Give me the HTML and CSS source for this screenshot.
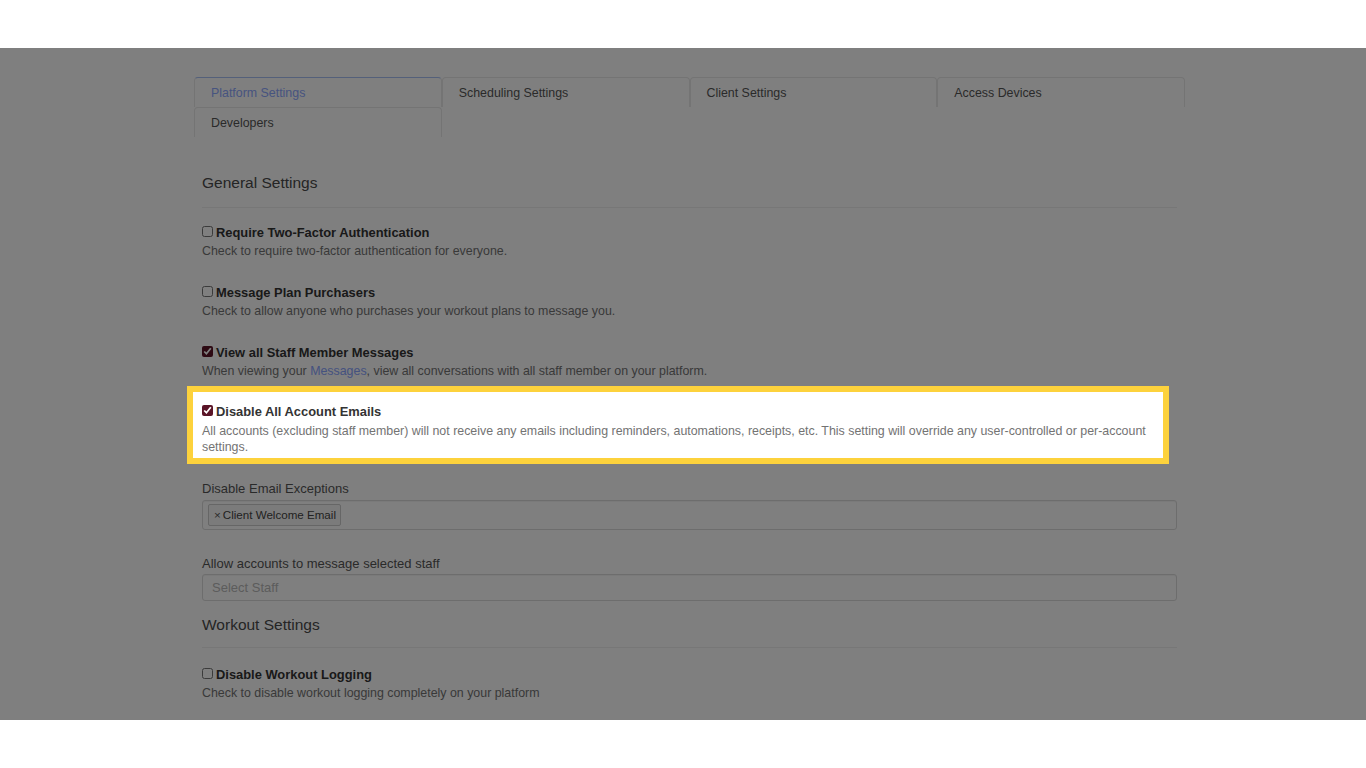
FILE: index.html
```html
<!DOCTYPE html>
<html lang="en">
<head>
  <meta charset="UTF-8">
  <meta name="viewport" content="width=device-width, initial-scale=1.0">
  <title>Platform Settings</title>
  <link rel="stylesheet" href="styles.css">
</head>
<body>
  <div class="screen">
    <div class="page">
      <div class="tabs">
        <div class="tab active">Platform Settings</div>
        <div class="tab">Scheduling Settings</div>
        <div class="tab">Client Settings</div>
        <div class="tab">Access Devices</div>
        <div class="tab">Developers</div>
      </div>

      <div class="content">
        <h2 class="section-title">General Settings</h2>
        <hr class="divider">

        <div class="setting">
          <label class="setting-title"><input type="checkbox">Require Two-Factor Authentication</label>
          <p class="setting-desc">Check to require two-factor authentication for everyone.</p>
        </div>

        <div class="setting">
          <label class="setting-title"><input type="checkbox">Message Plan Purchasers</label>
          <p class="setting-desc">Check to allow anyone who purchases your workout plans to message you.</p>
        </div>

        <div class="setting">
          <label class="setting-title"><input type="checkbox" checked>View all Staff Member Messages</label>
          <p class="setting-desc">When viewing your <a href="#">Messages</a>, view all conversations with all staff member on your platform.</p>
        </div>

        <div class="setting spotlight">
          <label class="setting-title"><input type="checkbox" checked>Disable All Account Emails</label>
          <p class="setting-desc">All accounts (excluding staff member) will not receive any emails including reminders, automations, receipts, etc. This setting will override any user-controlled or per-account settings.</p>
        </div>

        <div class="field">
          <div class="field-label">Disable Email Exceptions</div>
          <div class="multi-select">
            <span class="tag"><span class="tag-x">&times;</span>Client Welcome Email</span>
          </div>
        </div>

        <div class="field">
          <div class="field-label">Allow accounts to message selected staff</div>
          <div class="multi-select small">
            <span class="placeholder">Select Staff</span>
          </div>
        </div>

        <h2 class="section-title workout">Workout Settings</h2>
        <hr class="divider workout">

        <div class="setting">
          <label class="setting-title"><input type="checkbox">Disable Workout Logging</label>
          <p class="setting-desc">Check to disable workout logging completely on your platform</p>
        </div>
      </div>
    </div>
  </div>
</body>
</html>
```

FILE: styles.css
```css
body {
  margin: 0;
  background-color: #ffffff;
  font-family: "Liberation Sans", Arial, sans-serif;
  color: #333333;
}

.screen {
  margin-top: 48px;
  height: 672px;
  overflow: hidden;
  background-color: #ffffff;
  padding: 29px 181px 0 194px;
  box-sizing: border-box;
}

.tabs {
  display: grid;
  grid-template-columns: repeat(4, 1fr);
}

.tab {
  height: 29px;
  line-height: 30px;
  padding: 0 16px;
  font-size: 12.4px;
  color: #555555;
  border: 1px solid #e8e8e8;
  border-bottom: none;
  border-radius: 4px 4px 0 0;
}

.tab.active {
  color: #8ea8ff;
  border-top-color: #a9c0f4;
}

.content {
  padding: 0 8px;
}

.section-title {
  margin: 36px 0 0;
  font-size: 15.5px;
  font-weight: normal;
  line-height: 20px;
  color: #4a4a4a;
}

.section-title.workout {
  margin-top: 14px;
}

.divider {
  border: none;
  border-top: 1px solid #eeeeee;
  margin: 14px 0 15px;
}

.divider.workout {
  margin: 12px 0 17px;
}

.setting {
  margin-bottom: 24px;
}

.setting-title {
  display: flex;
  align-items: center;
  font-size: 12.9px;
  font-weight: bold;
  line-height: 20px;
  color: #333333;
}

.setting-title input {
  width: 11px;
  height: 11px;
  margin: -4px 3px 0 0;
  accent-color: #5a1426;
}

.setting-desc {
  margin: 0;
  font-size: 12.4px;
  line-height: 16px;
  color: #737373;
}

.setting-desc a {
  color: #8aa4ff;
  text-decoration: none;
}

.spotlight {
  position: relative;
  z-index: 1;
  margin: -17px 8px 0 -15px;
  padding: 10px 10px 3px 9px;
  border: 6px solid #fdd23c;
  background-color: #ffffff;
  box-shadow: 0 0 0 3000px rgba(0, 0, 0, 0.5);
}

.spotlight .setting-title {
  margin-bottom: 1px;
}

.field {
  margin-top: 16px;
}

.field + .field {
  margin-top: 25px;
}

.field-label {
  font-size: 13px;
  line-height: 18px;
  color: #555555;
  margin-bottom: 2px;
}

.field + .field .field-label {
  margin-bottom: 1px;
}

.multi-select {
  height: 30px;
  box-sizing: border-box;
  border: 1px solid #dadada;
  border-radius: 3px;
  box-shadow: inset 0 1px 1px rgba(0, 0, 0, 0.05);
  display: flex;
  align-items: center;
  padding: 0 5px;
}

.multi-select.small {
  height: 27px;
  padding: 0 9px;
}

.tag {
  height: 22px;
  line-height: 20px;
  box-sizing: border-box;
  padding: 0 4px 0 5px;
  border: 1px solid #cccccc;
  border-radius: 2px;
  background-color: #f7f7f7;
  font-size: 11.6px;
  color: #444444;
}

.tag-x {
  margin-right: 2px;
  color: #555555;
}

.placeholder {
  font-size: 13px;
  color: #b8b8b8;
}
```
